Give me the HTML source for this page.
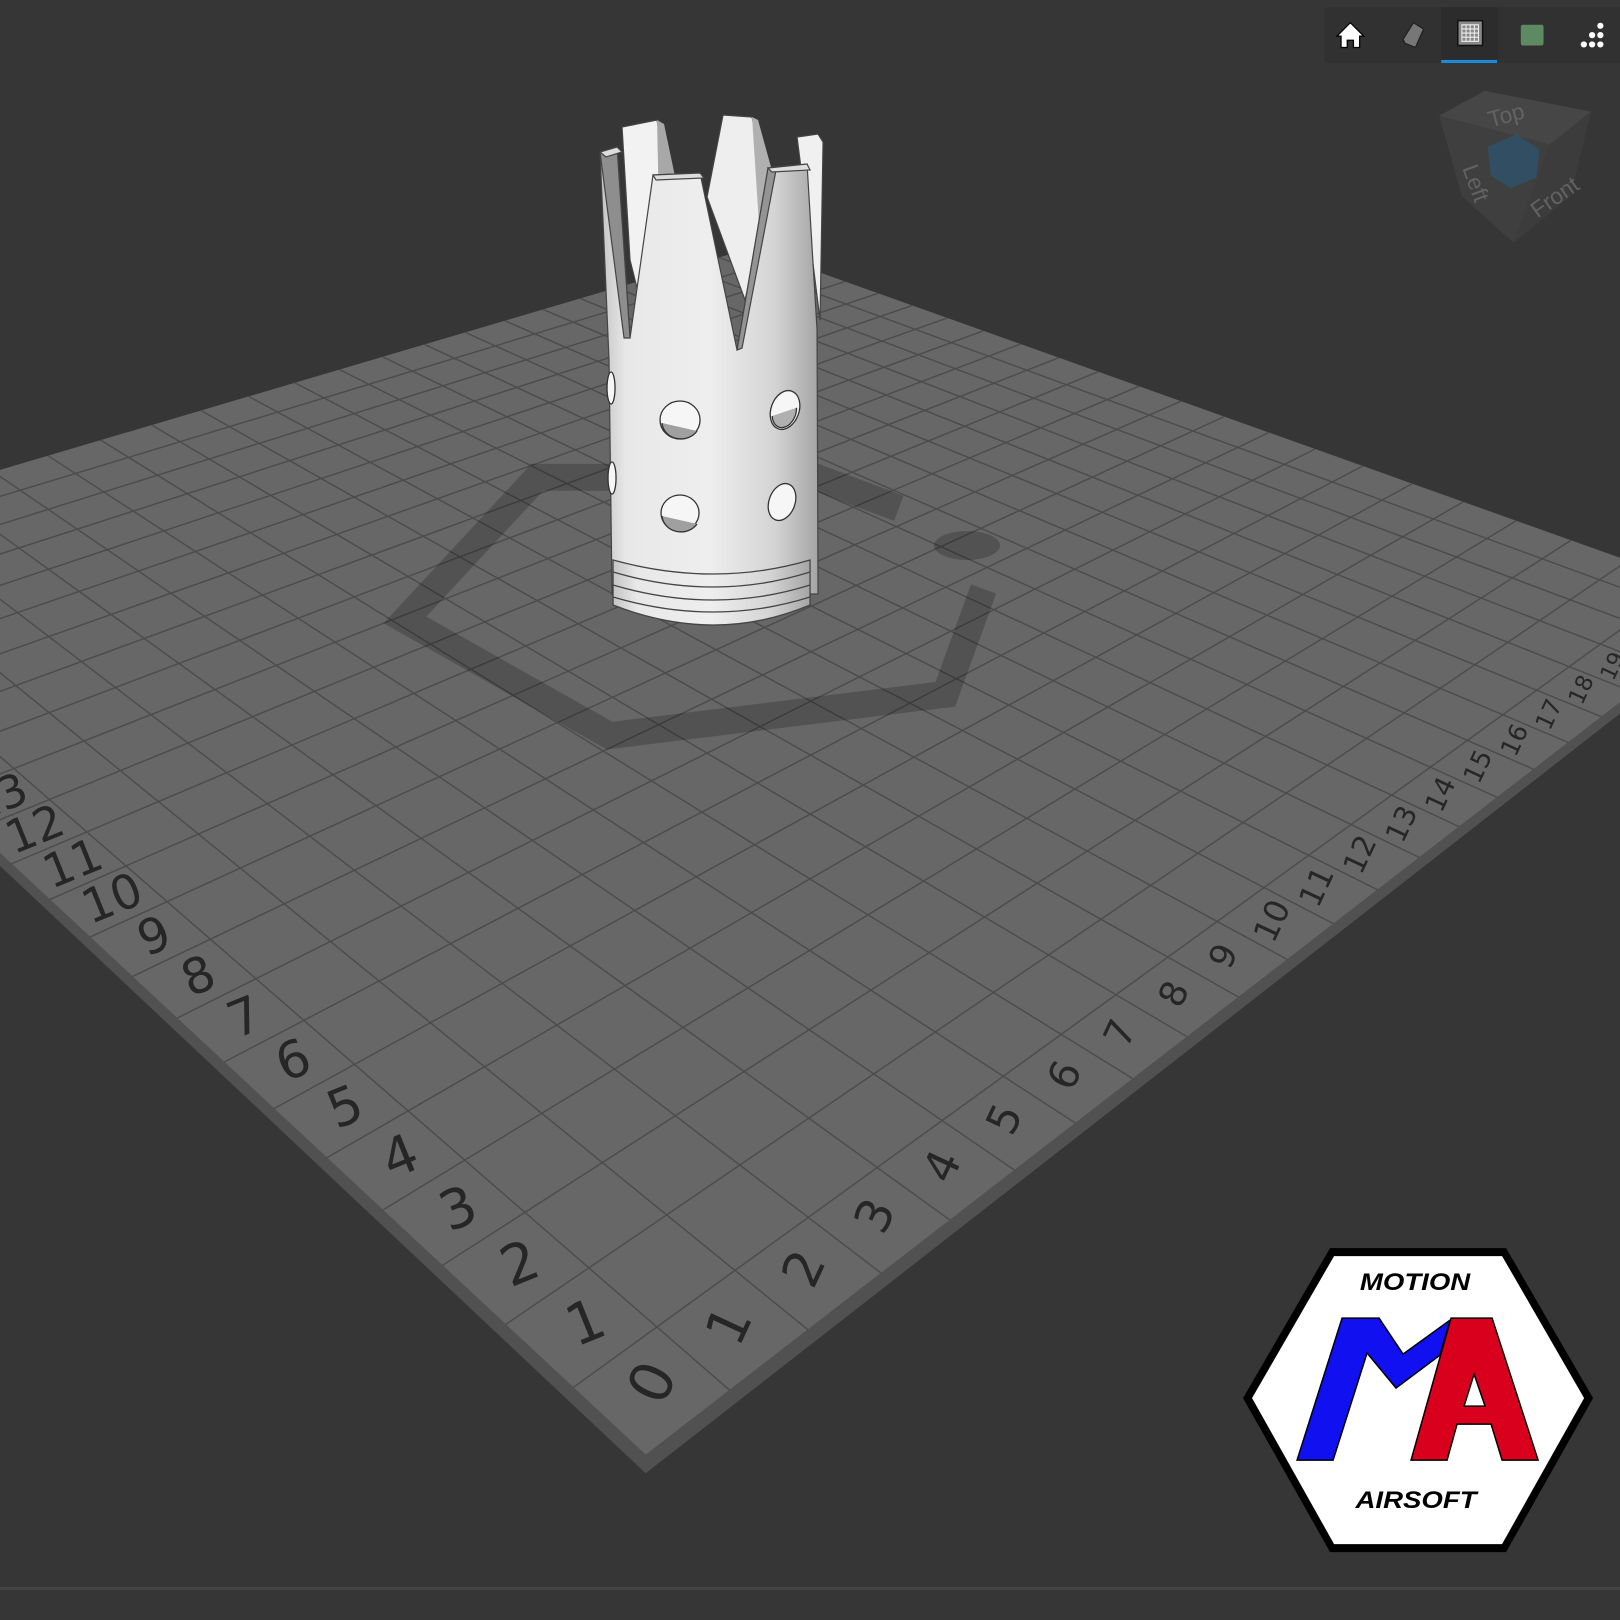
<!DOCTYPE html>
<html><head><meta charset="utf-8"><style>
html,body{margin:0;padding:0;background:#363636;width:1620px;height:1620px;overflow:hidden}
svg{display:block}
</style></head><body>
<svg id="s" width="1620" height="1620" viewBox="0 0 1568 1568" xmlns="http://www.w3.org/2000/svg" font-family="Liberation Sans, sans-serif">
<defs>
<linearGradient id="cyl" x1="0" x2="1" y1="0" y2="0">
<stop offset="0" stop-color="#c4c4c4"/><stop offset="0.12" stop-color="#e8e8e8"/><stop offset="0.5" stop-color="#eeeeee"/><stop offset="0.8" stop-color="#d4d4d4"/><stop offset="1" stop-color="#a5a5a5"/>
</linearGradient>
</defs>
<rect width="1568" height="1568" fill="#363636"/>
<g id="plane"></g>
<g fill="none" stroke="#000" stroke-width="26" stroke-linejoin="miter" opacity="0.2">
<polyline points="870,492 790,462 520,462 392,600 590,712 915,672 952,570"/>
</g>
<ellipse cx="936" cy="528" rx="32" ry="14" fill="#000" opacity="0.2"/>
<g transform="scale(0.96795)" stroke="#444" stroke-width="1.2">
<polygon points="622,127 657,120 672,200 640,300 630,260" fill="#f2f2f2"/>
<polygon points="657,120 664,124 682,210 660,260" fill="#a8a8a8" stroke="none"/>
<polygon points="723,115 752,117 770,195 745,300 707,197" fill="#eeeeee"/>
<polygon points="752,117 758,120 780,200 760,240" fill="#b0b0b0" stroke="none"/>
<polygon points="797,137 818,134 823,142 820,320 805,200" fill="#f0f0f0"/>
<path d="M600,152 L617,147 L630,338 L653,175 L700,173 L737,350 L768,168 L807,164 L817,330 L818,594 L612,594 L609,360 Z" fill="url(#cyl)"/>
<polygon points="600,152 617,147 630,338 624,338" fill="#8e8e8e"/>
<polygon points="768,168 776,170 742,348 737,350" fill="#949494"/>
<polygon points="600,152 617,147 622,152 606,157" fill="#ddd"/>
<polygon points="653,175 700,173 704,178 656,180" fill="#ddd"/>
<polygon points="768,168 807,164 810,170 772,172" fill="#ddd"/>
</g>
<g transform="scale(0.96795)" stroke="#333" stroke-width="1.3">
<ellipse cx="680" cy="420" rx="20" ry="19" fill="#f6f6f6"/><path d="M662,423 A19,17 0 0 0 697,431" fill="#a0a0a0"/>
<ellipse cx="680" cy="513" rx="19" ry="18" fill="#f6f6f6"/><path d="M662,516 A19,17 0 0 0 697,524" fill="#a0a0a0"/>
<ellipse cx="785" cy="410" rx="14" ry="20" fill="#f6f6f6" transform="rotate(20 785 410)"/><path d="M775,420 A10,14 0 0 0 795,404" fill="#b0b0b0" transform="rotate(20 785 410)"/>
<ellipse cx="782" cy="502" rx="13" ry="19" fill="#f6f6f6" transform="rotate(20 782 502)"/>
<ellipse cx="611" cy="388" rx="4" ry="16" fill="#f6f6f6"/>
<ellipse cx="612" cy="478" rx="4" ry="16" fill="#f6f6f6"/>
</g>
<g transform="scale(0.96795)" stroke="#444" stroke-width="1.3">
<path d="M613,560 L613,605 Q715,645 810,605 L810,560 Q715,588 613,560 Z" fill="url(#cyl)"/>
<path d="M613,572 Q715,602 810,572" fill="none"/>
<path d="M613,585 Q715,615 810,585" fill="none"/>
<path d="M613,597 Q715,627 810,597" fill="none"/>
</g>
<g opacity="0.45">
<polygon points="1437,88 1540,108 1500,140 1393,112" fill="#5a5a5a"/>
<polygon points="1393,112 1500,140 1465,235 1415,190" fill="#4c4c4c"/>
<polygon points="1500,140 1540,108 1520,190 1465,235" fill="#444"/>
<polygon points="1440,142 1468,130 1490,145 1487,172 1462,182 1443,170" fill="#2d6b9a"/>
<text x="1440" y="117" fill="#999" font-size="22" transform="rotate(-15 1465 110)">Top</text>
<text x="1410" y="180" fill="#999" font-size="22" transform="rotate(70 1425 175)">Left</text>
<text x="1475" y="200" fill="#999" font-size="22" transform="rotate(-35 1500 185)">Front</text>
</g>
<rect x="1282" y="7" width="286" height="54" fill="#313131"/>
<rect x="1395" y="7" width="55" height="54" fill="#2c2c2c"/>
<rect x="1395" y="58" width="54" height="3" fill="#1e8ad6"/>
<g>
<path d="M1294,35 L1307,22 L1320,35 L1316,35 L1316,46 L1310,46 L1310,39 L1304,39 L1304,46 L1298,46 L1298,35 Z" fill="#fff" stroke="#000" stroke-width="1.2"/>
<path d="M1358,38 L1368,22 L1378,28 L1370,46 L1360,42 Z" fill="#777" stroke="#222" stroke-width="1.3"/>
<rect x="1411" y="20" width="24" height="24" fill="#888" stroke="#111" stroke-width="1.5"/>
<path d="M1415,24h16v16h-16z M1419,24v16 M1423,24v16 M1427,24v16 M1415,28h16 M1415,32h16 M1415,36h16" stroke="#eee" stroke-width="1" fill="none"/>
<rect x="1472" y="24" width="22" height="20" rx="2" fill="#5d8a60"/>
<g fill="#fff"><circle cx="1549" cy="25" r="3"/><circle cx="1549" cy="34" r="3"/><circle cx="1549" cy="43" r="3"/><circle cx="1541" cy="34" r="3"/><circle cx="1541" cy="43" r="3"/><circle cx="1533" cy="43" r="3"/></g>
</g>
<rect x="0" y="1536" width="1568" height="3" fill="#444"/>
<g transform="scale(0.96795)">
<polygon points="1243,1398 1330,1248 1506,1248 1593,1398 1506,1552 1330,1552" fill="#000"/>
<polygon points="1252,1398 1334,1256 1502,1256 1584,1398 1502,1544 1334,1544" fill="#fff"/>
<text x="1415" y="1290" text-anchor="middle" font-size="24" font-weight="bold" font-style="italic" fill="#000" transform="translate(1415 0) scale(1.15 1) translate(-1415 0)">MOTION</text>
<text x="1416" y="1508" text-anchor="middle" font-size="24" font-weight="bold" font-style="italic" fill="#000" transform="translate(1416 0) scale(1.15 1) translate(-1416 0)">AIRSOFT</text>
<polygon points="1342,1318 1379,1318 1403,1354 1450,1320 1440,1355 1396,1388 1367,1353 1333,1460 1297,1460" fill="#1010f0" stroke="#000" stroke-width="1.5"/>
<path d="M1451,1318 L1492,1318 L1538,1460 L1502,1460 L1491,1424 L1457,1424 L1447,1460 L1411,1460 Z M1474,1374 L1485,1406 L1464,1406 Z" fill="#d8001c" fill-rule="evenodd" stroke="#000" stroke-width="1.5"/>
</g>
</svg>
<script>
(function(){
var NS="http://www.w3.org/2000/svg",g=document.getElementById("plane");
function solve(A,b){var n=b.length;for(var i=0;i<n;i++){var m=i;for(var r=i+1;r<n;r++)if(Math.abs(A[r][i])>Math.abs(A[m][i]))m=r;
var t=A[i];A[i]=A[m];A[m]=t;t=b[i];b[i]=b[m];b[m]=t;
for(var r=i+1;r<n;r++){var f=A[r][i]/A[i][i];for(var c=i;c<n;c++)A[r][c]-=f*A[i][c];b[r]-=f*b[i];}}
var x=new Array(n);for(var i=n-1;i>=0;i--){var s=b[i];for(var c=i+1;c<n;c++)s-=A[i][c]*x[c];x[i]=s/A[i][i];}return x;}
var N=23;
var src=[[0,0],[N,0],[N,N],[0,N]],dst=[[625,1408],[1692,584],[727,240],[-302,544]];
var A=[],b=[];for(var i=0;i<4;i++){var u=src[i][0],v=src[i][1],X=dst[i][0],Y=dst[i][1];
A.push([u,v,1,0,0,0,-u*X,-v*X]);b.push(X);A.push([0,0,0,u,v,1,-u*Y,-v*Y]);b.push(Y);}
var h=solve(A,b);
function M(u,v){var w=h[6]*u+h[7]*v+1;return [(h[0]*u+h[1]*v+h[2])/w,(h[3]*u+h[4]*v+h[5])/w];}
function el(n,a){var e=document.createElementNS(NS,n);for(var k in a)e.setAttribute(k,a[k]);g.appendChild(e);return e;}
var F=M(0,0),R=M(N,0),B=M(N,N),L=M(0,N);
el("polygon",{points:[L[0]+","+(L[1]+10),F[0]+","+(F[1]+18),R[0]+","+(R[1]+10),R[0]+","+R[1],F[0]+","+F[1],L[0]+","+L[1]].join(" "),fill:"#515151"});
el("polygon",{points:[F,R,B,L].map(function(p){return p.join(",")}).join(" "),fill:"#676767"});
for(var i=1;i<N;i++){
var a=M(i,0),c=M(i,N);el("line",{x1:a[0],y1:a[1],x2:c[0],y2:c[1],stroke:"#4c4c4c","stroke-width":1.4});
a=M(0,i);c=M(N,i);el("line",{x1:a[0],y1:a[1],x2:c[0],y2:c[1],stroke:"#4c4c4c","stroke-width":1.4});}
var o=0.55;
function lab(u,v,txt,rot){var p=M(u,v),q=M(u+1,v),s=Math.hypot(q[0]-p[0],q[1]-p[1]);
var t=el("text",{x:p[0],y:p[1],"font-size":Math.max(14,s*0.58),fill:"#262626","text-anchor":"middle","dominant-baseline":"central","font-family":"DejaVu Sans, sans-serif",transform:"rotate("+rot+" "+p[0]+" "+p[1]+")"});t.textContent=txt;}
lab(o,o,"0",-65);
for(var k=1;k<N;k++){lab(k+0.5,o,k,-65);lab(o,k+0.5,k,-22);}
})();
</script>
</body></html>
